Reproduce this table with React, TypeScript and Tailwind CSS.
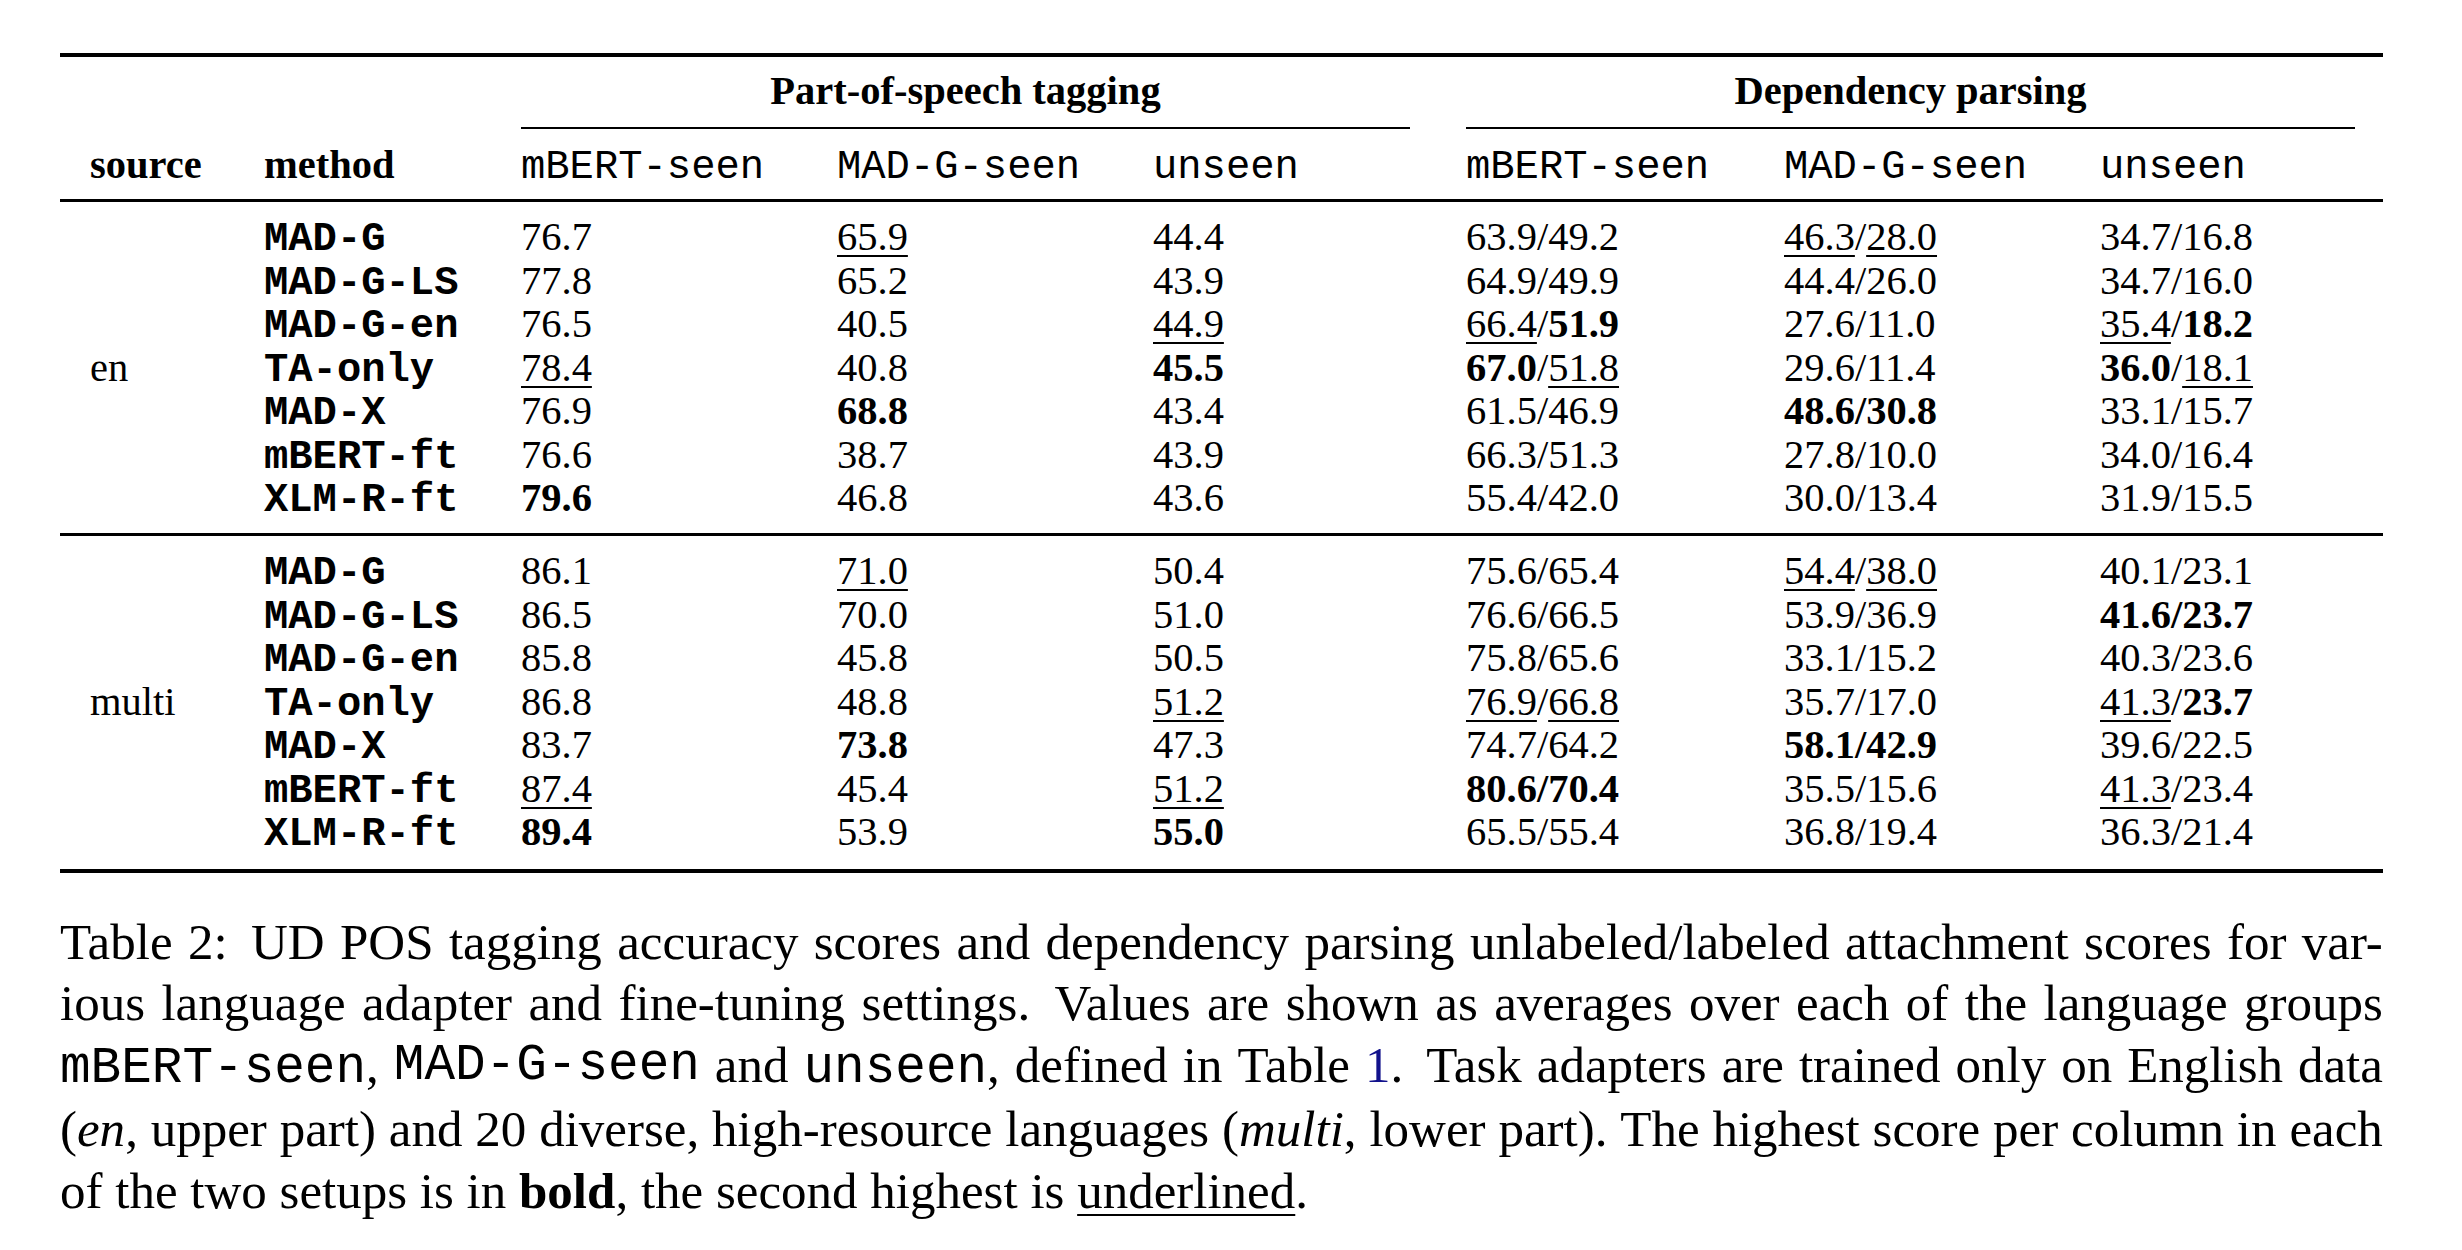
import { Fragment, type ReactNode } from "react";
import clsx from "clsx";

const serif = "font-['Liberation_Serif','Times_New_Roman',serif]";
const mono = "font-['Liberation_Mono','Courier_New',monospace]";
const cols = "grid grid-cols-[174px_257px_316px_316px_313px_318px_316px_1fr] pl-[30px]";

type Row = [string, string, string, string, string, string, string];

const en: Row[] = [
  ["MAD-G", "76.7", "_65.9", "44.4", "63.9/49.2", "_46.3/_28.0", "34.7/16.8"],
  ["MAD-G-LS", "77.8", "65.2", "43.9", "64.9/49.9", "44.4/26.0", "34.7/16.0"],
  ["MAD-G-en", "76.5", "40.5", "_44.9", "_66.4/!51.9", "27.6/11.0", "_35.4/!18.2"],
  ["TA-only", "_78.4", "40.8", "!45.5", "!67.0/_51.8", "29.6/11.4", "!36.0/_18.1"],
  ["MAD-X", "76.9", "!68.8", "43.4", "61.5/46.9", "!48.6/!30.8", "33.1/15.7"],
  ["mBERT-ft", "76.6", "38.7", "43.9", "66.3/51.3", "27.8/10.0", "34.0/16.4"],
  ["XLM-R-ft", "!79.6", "46.8", "43.6", "55.4/42.0", "30.0/13.4", "31.9/15.5"],
];

const multi: Row[] = [
  ["MAD-G", "86.1", "_71.0", "50.4", "75.6/65.4", "_54.4/_38.0", "40.1/23.1"],
  ["MAD-G-LS", "86.5", "70.0", "51.0", "76.6/66.5", "53.9/36.9", "!41.6/!23.7"],
  ["MAD-G-en", "85.8", "45.8", "50.5", "75.8/65.6", "33.1/15.2", "40.3/23.6"],
  ["TA-only", "86.8", "48.8", "_51.2", "_76.9/_66.8", "35.7/17.0", "_41.3/!23.7"],
  ["MAD-X", "83.7", "!73.8", "47.3", "74.7/64.2", "!58.1/!42.9", "39.6/22.5"],
  ["mBERT-ft", "_87.4", "45.4", "_51.2", "!80.6/!70.4", "35.5/15.6", "_41.3/23.4"],
  ["XLM-R-ft", "!89.4", "53.9", "!55.0", "65.5/55.4", "36.8/19.4", "36.3/21.4"],
];

// "!" = best (bold), "_" = second best (underlined)
function Score({ value }: { value: string }) {
  const parts = value.split("/");
  const allBold = parts.every((p) => p.startsWith("!"));
  return (
    <span>
      {parts.map((p, i) => {
        const bold = p.startsWith("!");
        const under = p.startsWith("_");
        return (
          <Fragment key={i}>
            {i > 0 && <span className={clsx(allBold && "font-bold")}>/</span>}
            <span className={clsx(bold && "font-bold", under && "underline decoration-[1.5px] underline-offset-[5px]")}>
              {bold || under ? p.slice(1) : p}
            </span>
          </Fragment>
        );
      })}
    </span>
  );
}

function Group({ label, rows, className }: { label: string; rows: Row[]; className: string }) {
  return (
    <div className={clsx(cols, "auto-rows-[43.5px] items-baseline", className)}>
      {rows.map((r, i) => (
        <Fragment key={r[0]}>
          <span>{i === 3 ? label : ""}</span>
          <span className={clsx(mono, "font-bold")}>{r[0]}</span>
          {r.slice(1).map((v, j) => <Score key={j} value={v} />)}
        </Fragment>
      ))}
    </div>
  );
}

function Line({ children }: { children: ReactNode }) {
  return <div className="flex justify-between whitespace-nowrap">{children}</div>;
}

const words = (s: string) => s.split(" ").map((x, i) => <span key={x + i}>{x}</span>);

export default function App() {
  return (
    <div className={clsx(serif, "h-[1250px] w-[2462px] bg-white pl-[60px] pt-[53px] text-black")}>
      <div className="w-[2323px] text-[40.5px] leading-[43.5px]">
        <div className="h-[4px] bg-black" />

        <div className={clsx(cols, "mt-[12px] h-[43.5px] font-bold")}>
          <div className="col-span-3 col-start-3 mr-[56px] text-center">Part-of-speech tagging</div>
          <div className="col-span-3 col-start-6 mr-[28px] text-center">Dependency parsing</div>
        </div>
        <div className={clsx(cols, "mt-[14.5px]")}>
          <div className="col-span-3 col-start-3 mr-[56px] h-[1.5px] bg-black" />
          <div className="col-span-3 col-start-6 mr-[28px] h-[1.5px] bg-black" />
        </div>

        <div className={clsx(cols, "mt-[14px] h-[43.5px] items-baseline")}>
          <span className="font-bold">source</span>
          <span className="font-bold">method</span>
          {["mBERT-seen", "MAD-G-seen", "unseen", "mBERT-seen", "MAD-G-seen", "unseen"].map((h, i) => (
            <span key={i} className={mono}>{h}</span>
          ))}
        </div>
        <div className="mt-[12.5px] h-[3px] bg-black" />

        <Group label="en" rows={en} className="pt-[13.5px] pb-[13px]" />
        <div className="h-[3px] bg-black" />
        <Group label="multi" rows={multi} className="pt-[13.5px] pb-[15px]" />
        <div className="h-[4px] bg-black" />
      </div>

      <div className="mt-[39px] w-[2323px] text-[51px] leading-[61.6px]">
        <Line>
          {words("Table 2:")}
          <span className="ml-[8px]">UD</span>
          {words("POS tagging accuracy scores and dependency parsing unlabeled/labeled attachment scores for var-")}
        </Line>
        <Line>
          {words("ious language adapter and fine-tuning settings.")}
          <span className="ml-[8px]">Values</span>
          {words("are shown as averages over each of the language groups")}
        </Line>
        <Line>
          <span><span className={mono}>mBERT-seen</span>,</span>
          <span className={mono}>MAD-G-seen</span>
          <span>and</span>
          <span><span className={mono}>unseen</span>,</span>
          {words("defined in Table")}
          <span><span className="text-[#12128c]">1</span>.</span>
          <span className="ml-[8px]">Task</span>
          {words("adapters are trained only on English data")}
        </Line>
        <Line>
          <span>(<i>en</i>,</span>
          {words("upper part) and 20 diverse, high-resource languages")}
          <span>(<i>multi</i>,</span>
          {words("lower part). The highest score per column in each")}
        </Line>
        <div>
          of the two setups is in <b>bold</b>, the second highest is{" "}
          <span className="underline decoration-[2px] underline-offset-[6px]">underlined</span>.
        </div>
      </div>
    </div>
  );
}
